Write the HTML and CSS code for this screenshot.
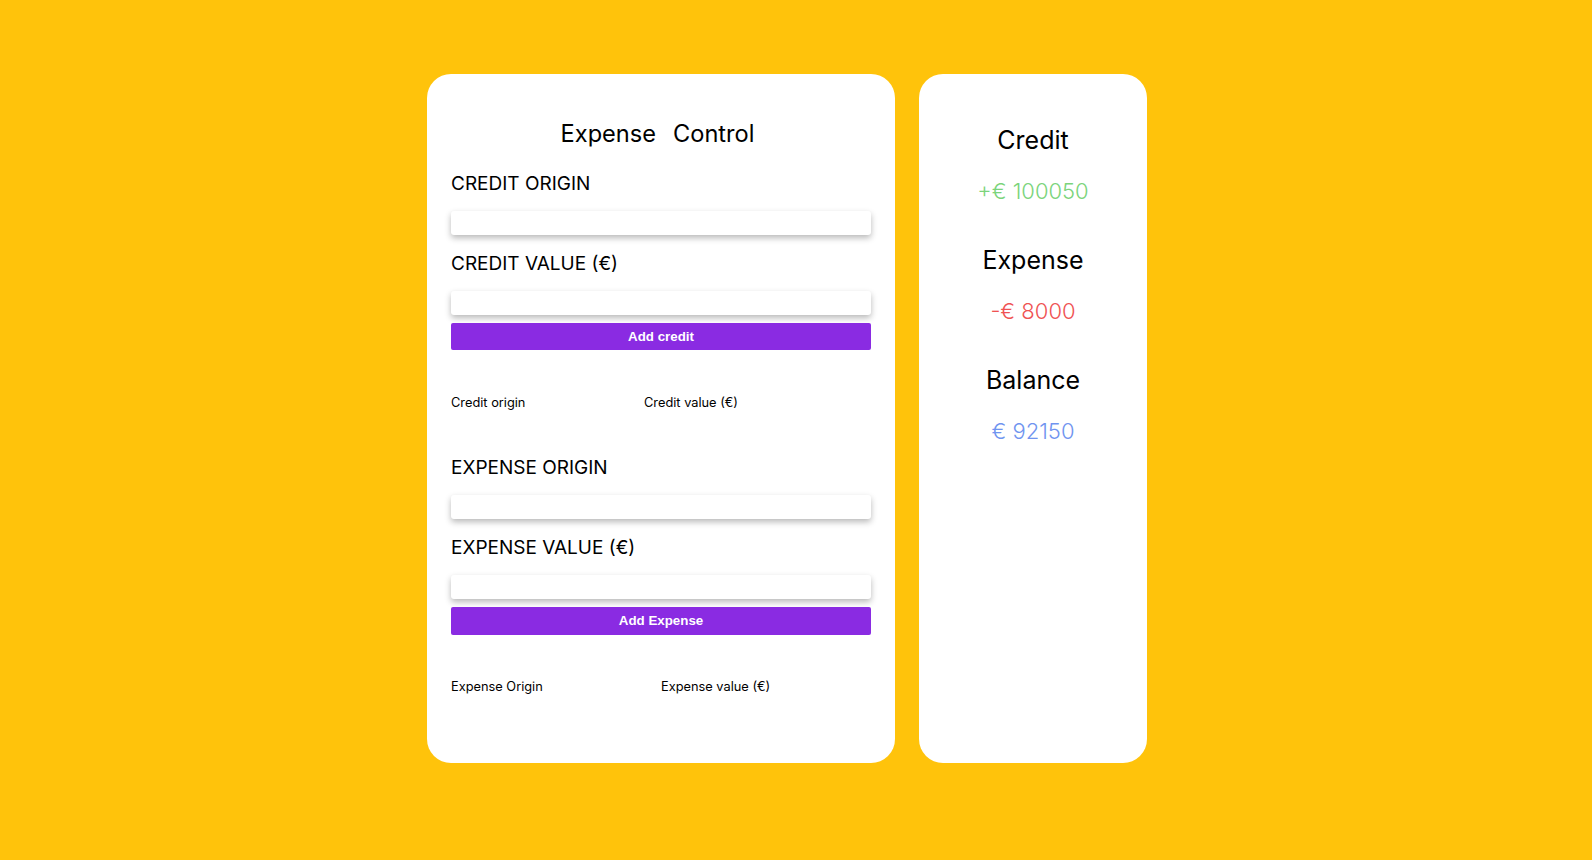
FILE: index.html
```html
<!DOCTYPE html>
<html lang="en">
<head>
<meta charset="utf-8">
<title>Expense Control</title>
<link rel="stylesheet" href="styles.css">
</head>
<body>
<main class="layout">
  <section class="card main-card">
    <h1 class="title"><span>Expense</span><span>Control</span></h1>

    <form class="entry">
      <label class="field-label" for="credit-origin">CREDIT ORIGIN</label>
      <input class="field-input" id="credit-origin" type="text">
      <label class="field-label" for="credit-value">CREDIT VALUE (€)</label>
      <input class="field-input" id="credit-value" type="text">
      <button class="btn" type="button">Add credit</button>
    </form>
    <table class="list list-credit">
      <thead>
        <tr><th class="col-a">Credit origin</th><th>Credit value (€)</th></tr>
      </thead>
    </table>

    <form class="entry entry-expense">
      <label class="field-label" for="expense-origin">EXPENSE ORIGIN</label>
      <input class="field-input" id="expense-origin" type="text">
      <label class="field-label" for="expense-value">EXPENSE VALUE (€)</label>
      <input class="field-input" id="expense-value" type="text">
      <button class="btn btn-expense" type="button">Add Expense</button>
    </form>
    <table class="list list-expense">
      <thead>
        <tr><th class="col-a">Expense Origin</th><th>Expense value (€)</th></tr>
      </thead>
    </table>
  </section>

  <aside class="card summary-card">
    <div class="stat">
      <h2 class="stat-title">Credit</h2>
      <p class="stat-value credit">+€ 100050</p>
    </div>
    <div class="stat">
      <h2 class="stat-title">Expense</h2>
      <p class="stat-value expense">-€ 8000</p>
    </div>
    <div class="stat">
      <h2 class="stat-title">Balance</h2>
      <p class="stat-value balance">€ 92150</p>
    </div>
  </aside>
</main>
</body>
</html>
```

FILE: styles.css
```css
* { box-sizing: border-box; }

body {
  margin: 0;
  background: #ffc30b;
  font-family: "Inter", "Liberation Sans", sans-serif;
  color: #000;
  min-height: 860px;
}

.layout {
  display: flex;
  justify-content: center;
  align-items: flex-start;
  gap: 24px;
  padding: 74px 18px 0 0;
}

.card {
  background: #fff;
  border-radius: 24px;
}

.main-card {
  width: 468px;
  height: 689px;
  padding: 45px 24px 0;
}

.title {
  margin: 0;
  padding-right: 7px;
  display: flex;
  justify-content: center;
  gap: 17px;
  font-size: 23.6px;
  font-weight: 400;
  line-height: 30px;
}

.entry {
  display: flex;
  flex-direction: column;
  margin-top: 23px;
}

.entry-expense { margin-top: 45px; }

.field-label {
  font-size: 19px;
  line-height: 24px;
}

.field-input {
  height: 24px;
  margin: 15px 0 17px;
  border: none;
  border-radius: 3px;
  background: #fff;
  box-shadow: 0 3px 6px rgba(0, 0, 0, 0.28);
}

.field-input + .btn { margin-top: -9px; }
.field-input + .btn-expense { margin-top: -9.5px; }

.btn {
  height: 27px;
  border: none;
  border-radius: 2px;
  background: #8a2be2;
  color: #fff;
  font-family: "Liberation Sans", Arial, sans-serif;
  font-weight: 700;
  font-size: 13.33px;
}

.btn-expense { height: 28px; }

.list {
  width: 100%;
  margin-top: 45px;
  border-collapse: collapse;
  table-layout: fixed;
}

.list-expense { margin-top: 44.5px; }

.list th {
  padding: 0;
  text-align: left;
  font-weight: 400;
  font-size: 12.8px;
  line-height: 16px;
}

.list-credit .col-a { width: 193px; }
.list-expense .col-a { width: 210px; }

.summary-card {
  width: 228px;
  height: 689px;
  padding-top: 50px;
  text-align: center;
}

.stat { margin-bottom: 39px; }

.stat-title {
  margin: 0 0 22px;
  font-size: 25px;
  font-weight: 400;
  line-height: 32px;
}

.stat-value {
  margin: 0;
  font-size: 22px;
  font-weight: 300;
  line-height: 27px;
}

.credit { color: #7bd47b; }
.expense { color: #ef5353; }
.balance { color: #7094f0; }
```
